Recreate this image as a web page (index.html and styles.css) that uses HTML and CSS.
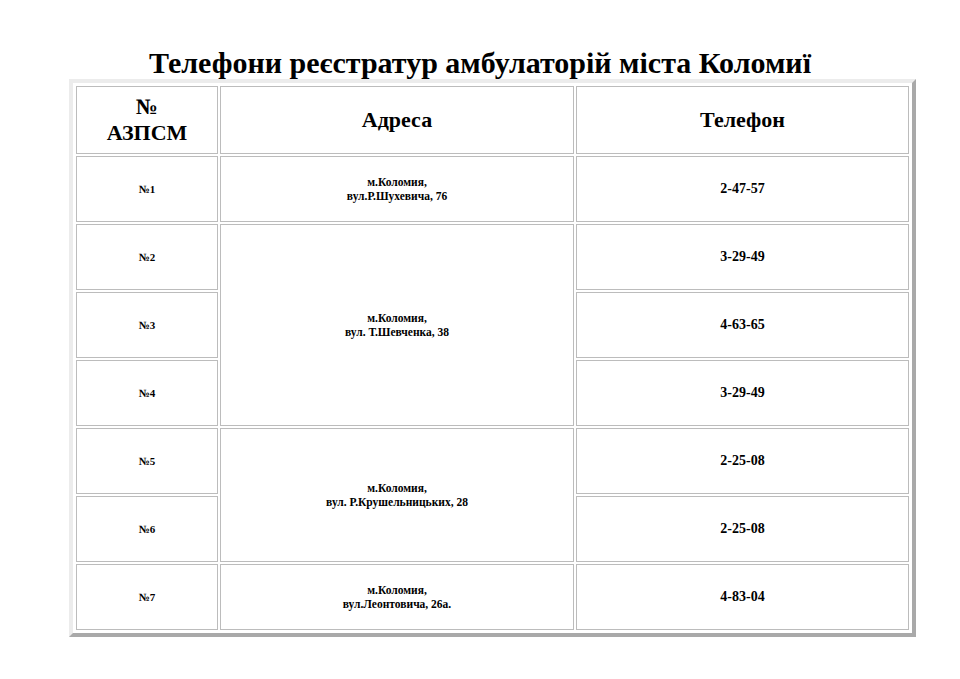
FILE: index.html
```html
<!DOCTYPE html>
<html lang="uk">
<head>
<meta charset="utf-8">
<title>Телефони реєстратур амбулаторій міста Коломиї</title>
<link rel="stylesheet" href="styles.css">
</head>
<body>
<h1 class="title">Телефони реєстратур амбулаторій міста Коломиї</h1>
<table class="phones">
  <thead>
    <tr>
      <th class="c-num">№<br>АЗПСМ</th>
      <th class="c-addr">Адреса</th>
      <th class="c-tel">Телефон</th>
    </tr>
  </thead>
  <tbody>
    <tr>
      <td class="num">№1</td>
      <td class="addr">м.Коломия,<br>вул.Р.Шухевича, 76</td>
      <td class="tel">2-47-57</td>
    </tr>
    <tr>
      <td class="num">№2</td>
      <td class="addr" rowspan="3">м.Коломия,<br>вул. Т.Шевченка, 38</td>
      <td class="tel">3-29-49</td>
    </tr>
    <tr>
      <td class="num">№3</td>
      <td class="tel">4-63-65</td>
    </tr>
    <tr>
      <td class="num">№4</td>
      <td class="tel">3-29-49</td>
    </tr>
    <tr>
      <td class="num">№5</td>
      <td class="addr" rowspan="2">м.Коломия,<br>вул. Р.Крушельницьких, 28</td>
      <td class="tel">2-25-08</td>
    </tr>
    <tr>
      <td class="num">№6</td>
      <td class="tel">2-25-08</td>
    </tr>
    <tr>
      <td class="num">№7</td>
      <td class="addr">м.Коломия,<br>вул.Леонтовича, 26а.</td>
      <td class="tel">4-83-04</td>
    </tr>
  </tbody>
</table>
</body>
</html>
```
FILE: styles.css
```css
html, body {
  margin: 0;
  padding: 0;
  background: #ffffff;
}

body {
  font-family: "Liberation Serif", "Times New Roman", serif;
  color: #000000;
}

.title {
  margin: 0;
  padding-top: 46px;
  font-size: 30px;
  line-height: 33px;
  font-weight: bold;
  text-align: center;
}

.phones {
  margin-left: 69px;
  border-collapse: separate;
  border-spacing: 2px;
  padding: 1px;
  border-style: solid;
  border-width: 4px;
  border-color: #ececec #a9a9a9 #a9a9a9 #ececec;
}

.phones th,
.phones td {
  box-sizing: border-box;
  border: 1px solid #bcbcbc;
  padding: 0;
  text-align: center;
  vertical-align: middle;
  font-weight: bold;
}

.phones th {
  height: 68px;
  font-size: 22px;
  line-height: 26px;
}

.phones td {
  height: 66px;
}

.c-num { width: 142px; }
.c-addr { width: 354px; }
.c-tel { width: 333px; }

.num {
  font-size: 11px;
}

.addr {
  font-size: 11.5px;
  line-height: 14px;
}

.tel {
  font-size: 14px;
}
```
